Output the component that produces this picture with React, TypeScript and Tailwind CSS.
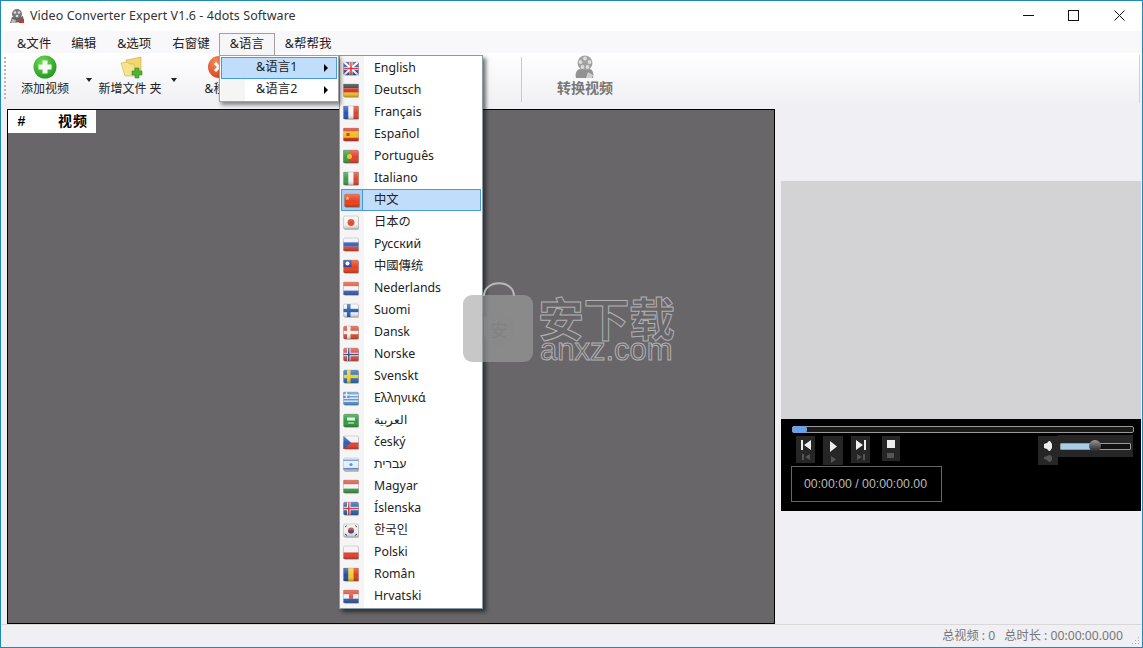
const UI = `"Noto Sans","Noto Sans CJK SC",sans-serif`;

function F({ children, bg = "#ddd" }: { children?: React.ReactNode; bg?: string }) {
  return (
    <svg width="16" height="15" viewBox="0 0 16 15" className="shrink-0">
      <defs>
        <linearGradient id="sh" x1="0" y1="0" x2="0" y2="1">
          <stop offset="0" stopColor="#fff" stopOpacity=".3" />
          <stop offset=".55" stopColor="#fff" stopOpacity="0" />
          <stop offset="1" stopColor="#000" stopOpacity=".25" />
        </linearGradient>
      </defs>
      <rect x="1.5" y="2" width="14.500" height="13" rx="1" fill="#000" fillOpacity=".18" />
      <g>
        <rect x="0.5" y="1" width="15" height="13" rx="1.500" fill={bg} />
        {children}
        <rect x="0.5" y="1" width="15" height="13" rx="1.500" fill="url(#sh)" stroke="#7778" strokeWidth=".5" />
      </g>
    </svg>
  );
}
const H = (c: string[]) => (
  <F>
    {c.map((x, i) => (
      <rect key={i} x=".5" y={1 + (13 / c.length) * i} width="15" height={13 / c.length} fill={x} />
    ))}
  </F>
);
const V = (c: string[]) => (
  <F>
    {c.map((x, i) => (
      <rect key={i} x={0.5 + (15 / c.length) * i} y="1" width={15 / c.length} height="13" fill={x} />
    ))}
  </F>
);
const N = (bg: string, c: string, c2?: string) => (
  <F bg={bg}>
    <rect x="4" y="1" width="3.500" height="13" fill={c} />
    <rect x=".5" y="5.800" width="15" height="3.400" fill={c} />
    {c2 && <rect x="5" y="1" width="1.500" height="13" fill={c2} />}
    {c2 && <rect x=".5" y="6.800" width="15" height="1.400" fill={c2} />}
  </F>
);

const langs: [string, React.ReactNode][] = [
  ["English", <F bg="#3a4f9a"><path d="M1 1l14 13M15 1L1 14" stroke="#fff" strokeWidth="2" /><rect x="6.500" y="1" width="3" height="13" fill="#fff" /><rect x=".5" y="6" width="15" height="3" fill="#fff" /><rect x="7.200" y="1" width="1.600" height="13" fill="#d33" /><rect x=".5" y="6.700" width="15" height="1.600" fill="#d33" /></F>],
  ["Deutsch", H(["#333", "#d8341e", "#f5c623"])],
  ["Français", V(["#2456b8", "#f4f4f8", "#e2402c"])],
  ["Español", <F bg="#f2bd1c"><rect x=".5" y="1" width="15" height="3.200" fill="#d6321c" /><rect x=".5" y="10.800" width="15" height="3.200" fill="#d6321c" /><rect x="3.500" y="6" width="3" height="3" fill="#b5451c" /></F>],
  ["Português", <F bg="#e0402a"><rect x=".5" y="1" width="6" height="13" fill="#3d9a3d" /><circle cx="6.500" cy="7.500" r="2.500" fill="#eac02e" /></F>],
  ["Italiano", V(["#3a9a48", "#f4f4f4", "#e2402c"])],
  ["中文", <F bg="#e8401c"><path d="M3.500 3l.6 1.500 1.500.1-1.200 1 .4 1.500-1.300-.8-1.300.8.4-1.500-1.200-1 1.500-.1z" fill="#f8d030" /></F>],
  ["日本の", <F bg="#f2f2f2"><circle cx="8" cy="7.500" r="3.400" fill="#e4482c" /></F>],
  ["Русский", H(["#f2f2f6", "#3a62b8", "#e2402c"])],
  ["中國傳统", <F bg="#e8401c"><rect x=".5" y="1" width="8" height="7" fill="#2a3f9c" /><circle cx="4.500" cy="4.500" r="2" fill="#fff" /></F>],
  ["Nederlands", H(["#e2502c", "#f4f4f8", "#3a62b8"])],
  ["Suomi", N("#f2f4f8", "#2a62b0")],
  ["Dansk", N("#dc4a34", "#f6f2f0")],
  ["Norske", N("#d84a38", "#f0f0f0", "#2a4f9c")],
  ["Svenskt", N("#2a6ab8", "#f2cf2a")],
  ["Ελληνικά", <F bg="#5c9ad8"><rect x=".5" y="3.500" width="15" height="1.400" fill="#eef" /><rect x=".5" y="6.500" width="15" height="1.400" fill="#eef" /><rect x=".5" y="9.500" width="15" height="1.400" fill="#eef" /><rect x=".5" y="1" width="6" height="6" fill="#4a88cc" /><rect x="2.800" y="1" width="1.400" height="6" fill="#eef" /><rect x=".5" y="3.300" width="6" height="1.400" fill="#eef" /></F>],
  ["العربية", <F bg="#2f9a3a"><rect x="4" y="4.500" width="8" height="3" fill="#dfe" /><rect x="5" y="9.500" width="6" height="1" fill="#dfe" /></F>],
  ["český", <F bg="#f2f2f2"><rect x=".5" y="7.500" width="15" height="6.500" fill="#e2402c" /><path d="M.5 1L8 7.500 .5 14z" fill="#2a5cb0" /></F>],
  ["עברית", <F bg="#e8eef8"><rect x=".5" y="2.500" width="15" height="1.500" fill="#5c8fd8" /><rect x=".5" y="11" width="15" height="1.500" fill="#5c8fd8" /><circle cx="8" cy="7.500" r="1.600" fill="#5c8fd8" /></F>],
  ["Magyar", H(["#dc4a30", "#f4f4f4", "#3f9a48"])],
  ["Íslenska", <F bg="#2a62b0"><rect x="4" y="1" width="3.500" height="13" fill="#eee" /><rect x=".5" y="5.800" width="15" height="3.400" fill="#eee" /><rect x="5" y="1" width="1.500" height="13" fill="#d33" /><rect x=".5" y="6.800" width="15" height="1.400" fill="#d33" /></F>],
  ["한국인", <F bg="#eeeeee"><circle cx="8" cy="7.500" r="3" fill="#d8402c" /><path d="M5 7.500a3 3 0 0 0 6 0z" fill="#2a4fa0" /><path d="M2 4l2-1.500M12 2.500l2 1.500M2 11l2 1.500M12 12.500l2-1.500" stroke="#333" strokeWidth="1" /></F>],
  ["Polski", H(["#f2f2f2", "#e2402c"])],
  ["Român", V(["#24499c", "#f6cc1e", "#dc3a22"])],
  ["Hrvatski", <F><rect x=".5" y="1" width="15" height="4.300" fill="#e2402c" /><rect x=".5" y="5.300" width="15" height="4.400" fill="#f2f2f2" /><rect x=".5" y="9.700" width="15" height="4.300" fill="#2a5cb0" /><rect x="6" y="4" width="4" height="6" fill="#d85a4c" /></F>],
];

function Film() {
  return (
    <svg width="24" height="24" viewBox="0 0 24 24">
      <circle cx="12" cy="8" r="7.500" fill="#a2a2a2" />
      {[[12, 3.500], [7.500, 7], [16.500, 7], [9.500, 12], [14.500, 12]].map(([x, y], i) => (
        <circle key={i} cx={x} cy={y} r="1.900" fill="#dcdcdc" />
      ))}
      <path d="M3 23c-1-4 0-8 4-9l5 1 5-1c3 1 4 5 3 9z" fill="#929292" />
      <path d="M13 23l2-6 5 3-1 3z" fill="#cfcfcf" />
    </svg>
  );
}

function Caret() {
  return <span className="w-0 h-0 border-x-[3px] border-x-transparent border-t-[4px] border-t-[#222]" />;
}

function PlayerBtn({ children, h = "h-[27px]", w = "w-[19px]" }: { children: React.ReactNode; h?: string; w?: string }) {
  return <div className={`${h} ${w} bg-[#262626] flex flex-col items-center pt-[4px]`}>{children}</div>;
}

function TB({ icon, label, w, extra = "" }: { icon: React.ReactNode; label: string; w: string; extra?: string }) {
  return (
    <div className={`${w} flex flex-col items-center shrink-0 ${extra}`}>
      <div className="h-[25px] flex items-end justify-center">{icon}</div>
      <div className="text-[12px] leading-[18px] mt-[1px] whitespace-nowrap">{label}</div>
    </div>
  );
}

export default function App() {
  return (
    <div
      className="relative w-[1143px] h-[648px] overflow-hidden bg-[#f0eff3] border border-[#1f8ab5] flex flex-col text-[#222]"
      style={{ fontFamily: UI }}
    >
      {/* title bar */}
      <div className="h-[30px] shrink-0 bg-white flex items-center pl-[8px]">
        <svg width="16" height="16" viewBox="0 0 16 16">
          <circle cx="8" cy="6" r="5" fill="#777" />
          <circle cx="6" cy="4.500" r="1.300" fill="#ddd" />
          <circle cx="10" cy="4.500" r="1.300" fill="#ddd" />
          <circle cx="8" cy="8" r="1.300" fill="#ddd" />
          <path d="M1 15l2-6 6 1 5-2 1 6z" fill="#666" />
          <rect x="10" y="11" width="5" height="4" fill="#c9392b" />
          <path d="M3 11l4 1-1 3H2z" fill="#bbb" />
        </svg>
        <span className="ml-[5px] text-[12.500px] text-[#333] leading-none tracking-[0.060px]">Video Converter Expert V1.6 - 4dots Software</span>
        <div className="ml-auto flex items-center pr-[17px] mt-[-1px]">
          <svg width="11" height="11" viewBox="0 0 11 11" className="mr-[34px]"><path d="M0 5.500h11" stroke="#111" /></svg>
          <svg width="11" height="11" viewBox="0 0 11 11" className="mr-[35px]"><rect x=".5" y=".5" width="10" height="10" fill="none" stroke="#111" /></svg>
          <svg width="11" height="11" viewBox="0 0 11 11"><path d="M.5 .5l10 10M10.500 .5l-10 10" stroke="#111" /></svg>
        </div>
      </div>

      {/* menu bar */}
      <div className="h-[22px] shrink-0 bg-[#f8f7fa] flex items-center pt-[4px] text-[12.500px] leading-none">
        <span className="ml-[16px]">&文件</span>
        <span className="ml-[20px]">编辑</span>
        <span className="ml-[21px]">&选项</span>
        <span className="ml-[21px]">右窗键</span>
        <span className="ml-[9px] relative z-30 self-start mt-[-2px] w-[56px] h-[22px] border border-b-0 border-[#a0a0a0] bg-[#f6f6f8] flex items-center justify-center">&语言</span>
        <span className="ml-[10px]">&帮帮我</span>
      </div>

      {/* toolbar */}
      <div className="h-[53px] shrink-0 bg-gradient-to-b from-[#ffffff] to-[#f0eff3] flex items-start pl-[3px] pt-[1px] relative">
        <div className="h-[42px] w-0 border-l-2 border-dotted border-[#b8b8b8] mt-[3px]" />
        <TB
          w="w-[74px]"
          extra="ml-[2px]"
          label="添加视频"
          icon={
            <svg width="24" height="24" viewBox="0 0 24 24">
              <defs>
                <radialGradient id="g" cx=".4" cy=".3" r=".8">
                  <stop offset="0" stopColor="#6fdc50" />
                  <stop offset="1" stopColor="#1c8f1c" />
                </radialGradient>
              </defs>
              <circle cx="12" cy="12" r="11.500" fill="url(#g)" />
              <path d="M9.500 5.500h5v4h4v5h-4v4h-5v-4h-4v-5h4z" fill="#f4fbf2" />
            </svg>
          }
        />
        <div className="w-[8px] ml-[3px] mt-[24px] flex justify-center shrink-0"><Caret /></div>
        <TB
          w="w-[74px]"
          label="新增文件 夹"
          icon={
            <svg width="24" height="24" viewBox="0 0 24 24" className="ml-[3px]">
              <path d="M6 5l6-1 9-2v14L8 20z" fill="#f3d66e" stroke="#c9a640" strokeWidth=".6" />
              <path d="M1 8l6-1 3 2h4l1 12H5z" fill="#f7e38c" stroke="#cfae48" strokeWidth=".6" />
              <path d="M15 13h4v3h3v4h-3v3h-4v-3h-3v-4h3z" fill="#4fb33a" stroke="#2f8a2a" strokeWidth=".6" />
            </svg>
          }
        />
        <div className="w-[8px] ml-[3px] mt-[24px] flex justify-center shrink-0"><Caret /></div>
        <TB
          w="w-[60px]"
          extra="ml-[13px]"
          label="&移除"
          icon={
            <svg width="24" height="24" viewBox="0 0 24 24" className="mr-[4px]">
              <defs>
                <radialGradient id="r" cx=".4" cy=".3" r=".8">
                  <stop offset="0" stopColor="#f59060" />
                  <stop offset="1" stopColor="#d23a14" />
                </radialGradient>
              </defs>
              <circle cx="12" cy="12" r="11" fill="url(#r)" />
              <path d="M8 8l8 8M16 8l-8 8" stroke="#fff" strokeWidth="3" />
            </svg>
          }
        />
        <div className="ml-[270px] h-[45px] w-px bg-[#c8c8c8] mt-[3px]" />
        <div className="w-[126px] flex flex-col items-center shrink-0 text-[#777] font-bold">
          <div className="h-[25px] flex items-end"><Film /></div>
          <div className="text-[14px] leading-[18px] whitespace-nowrap">转换视频</div>
        </div>
        <div className="ml-auto mr-[2px] mt-[1px] h-[48px] w-px bg-[#d0d0d0]" />
      </div>

      {/* body */}
      <div className="flex-1 min-h-0 flex pl-[6px] pt-[3px]">
        <div className="w-[768px] h-[515px] border border-black bg-[#686669] shrink-0">
          <div className="w-[88px] h-[23px] pb-[2px] bg-white flex items-center text-[14px] font-bold text-black leading-none">
            <span className="w-[27px] text-center" style={{ fontFamily: `"Liberation Sans",sans-serif` }}>#</span>
            <span className="w-[61px] pl-[23px] tracking-[1px]">视频</span>
          </div>
        </div>
        <div className="ml-[6px] w-[360px] shrink-0 flex flex-col">
          <div className="h-[72px]" />
          <div className="h-[238px] bg-[#d3d2d5]" />
          <div className="h-[92px] bg-black px-[10px] pt-[7px]">
            <div className="relative h-[7px] rounded-[2px] border border-[#999] bg-[#1a1a1a] mr-[-3px] ml-[1px]">
              <div className="absolute left-[-1px] top-[-1px] w-[15px] h-[7px] rounded-[3px] bg-[#6aa0e8]" />
            </div>
            <div className="flex items-start mt-[3px] pl-[5px] mr-[-2px]">
              <PlayerBtn>
                <svg width="12" height="22" viewBox="0 0 12 22"><path d="M1 0h2v10H1zM11 0v10L4 5z" fill="#eee" /><path d="M2 14h2v6H2zM10 14v6l-5-3z" fill="#555" /></svg>
              </PlayerBtn>
              <div className="ml-[8px]">
                <PlayerBtn h="h-[29px]" w="w-[20px]">
                  <svg width="12" height="24" viewBox="0 0 12 24"><path d="M3 1l7 5.500-7 5.500z" fill="#eee" /><path d="M4 16l5 3.500-5 3.500z" fill="#555" /></svg>
                </PlayerBtn>
              </div>
              <div className="ml-[8px]">
                <PlayerBtn>
                  <svg width="12" height="22" viewBox="0 0 12 22"><path d="M1 0v10l7-5zM9 0h2v10H9z" fill="#eee" /><path d="M2 14v6l5-3zM8 14h2v6H8z" fill="#555" /></svg>
                </PlayerBtn>
              </div>
              <div className="ml-[12px]">
                <PlayerBtn h="h-[25px]" w="w-[18px]">
                  <svg width="10" height="20" viewBox="0 0 10 20"><rect x="1" y="0" width="8" height="8" fill="#eee" /><rect x="1" y="13" width="7" height="5" fill="#555" /></svg>
                </PlayerBtn>
              </div>
              <div className="ml-auto flex items-start">
                <PlayerBtn h="h-[29px]" w="w-[20px]">
                  <svg width="10" height="24" viewBox="0 0 10 24"><path d="M1 4l3-1 2-2h1l2 3v4l-2 3H6L4 9 1 8z" fill="#eee" /><path d="M1 17l3-1 2-1h1l2 2v3l-2 2H6l-2-2-3-1z" fill="#555" /></svg>
                </PlayerBtn>
                <div className="w-[75px] h-[22px] bg-[#262626] mt-[-1px] relative flex items-center px-[2px]">
                  <div className="w-full h-[7px] border border-[#999] bg-[#111] rounded-[1px]">
                    <div className="w-[32px] h-full bg-[#a8cde8]" />
                  </div>
                  <div className="absolute left-[31px] top-[5px] w-[12px] h-[12px] rounded-full bg-gradient-to-b from-[#999] to-[#222]" />
                </div>
              </div>
            </div>
            <div className="w-[151px] h-[36px] border border-[#666] mt-[1px] pr-[2px] flex items-center justify-center text-[12.300px] text-[#bbb]" style={{ fontFamily: `"Liberation Sans",sans-serif` }}>
              00:00:00 / 00:00:00.00
            </div>
          </div>
        </div>
      </div>

      {/* status bar */}
      <div className="h-[23px] shrink-0 border-t border-[#d8d8d8] bg-[#f0eff3] flex items-center justify-end pr-[19px] text-[12.200px] text-[#777] leading-none relative">
        <span>总视频 : 0</span>
        <span className="ml-[9px]">总时长 : 00:00:00.000</span>
        <svg width="10" height="10" viewBox="0 0 10 10" className="absolute right-[2px] bottom-[1px]">
          <path d="M8 1h1v1H8zM8 4h1v1H8zM8 7h1v1H8zM5 4h1v1H5zM5 7h1v1H5zM2 7h1v1H2z" fill="#aaa" />
        </svg>
      </div>

      {/* active first drop-down */}
      <div className="absolute left-[218px] top-[54px] w-[120px] h-[47px] border border-[#a0a0a0] bg-white shadow-[2px_3px_4px_rgba(0,0,0,.45)] z-20 p-[1px] text-[12.500px] leading-none">
        <div className="h-[22px] pb-[2px] bg-[#c0ddfb] border border-[#4a9ad8] flex items-center relative">
          <span className="ml-[34px]">&语言1</span>
          <span className="absolute right-[8px] top-[6px] w-0 h-0 border-y-[4px] border-y-transparent border-l-[4px] border-l-black" />
        </div>
        <div className="h-[22px] pb-[2px] flex items-center relative">
          <div className="absolute left-0 top-0 w-[24px] h-full bg-[#f5f5f5]" />
          <span className="ml-[35px] relative">&语言2</span>
          <span className="absolute right-[9px] top-[7px] w-0 h-0 border-y-[4px] border-y-transparent border-l-[4px] border-l-black" />
        </div>
      </div>

      {/* language drop-down */}
      <div className="absolute left-[338px] top-[54px] w-[144px] border border-[#8c9aa8] bg-white shadow-[3px_3px_4px_rgba(0,0,0,.55)] z-10 py-[1px] text-[12.300px] leading-none">
        <div className="absolute left-0 top-0 bottom-0 w-[24px] bg-[#f5f5f6]" />
        {langs.map(([name, flag]) =>
          name === "中文" ? (
            <div key={name} className="relative h-[22px] flex items-center mx-[1px] bg-[#c0ddfb] border border-[#4a9ad8]">
              <div className="h-full w-[21px] border-r border-[#4a9ad8] bg-[#a8cdf2] flex items-center justify-center"><span className="flex">{flag}</span></div>
              <span className="ml-[11px]">{name}</span>
            </div>
          ) : (
            <div key={name} className="relative h-[22px] flex items-center">
              <div className="ml-[3px] flex">{flag}</div>
              <span className="ml-[15px] whitespace-nowrap">{name}</span>
            </div>
          )
        )}
      </div>

      {/* watermark */}
      <div className="absolute left-[462px] top-[281px] flex pointer-events-none z-40" aria-hidden>
        <svg width="70" height="81" viewBox="0 0 70 81">
          <path d="M21 14C21-3 51-3 51 14" fill="none" stroke="#b8b8ba" strokeWidth="2" />
          <rect x="0" y="13" width="70" height="67" rx="9" fill="#a2a2a2" fillOpacity=".6" />
          <path d="M21 35l15-4 15 4v16c0 8-8 11-15 15-7-4-15-7-15-15z" fill="#8a898b" fillOpacity=".55" />
          <text x="36" y="55" textAnchor="middle" fontSize="18" fill="#7d7c7e" fillOpacity=".6">安</text>
        </svg>
        <div className="ml-[5px] mt-[11px] flex flex-col items-start text-transparent" style={{ WebkitTextStroke: "1px #b0afb1", fontFamily: `"Noto Sans CJK SC",sans-serif` }}>
          <span className="text-[46px] font-bold leading-[46px] h-[46px] tracking-[-0.500px]">安下载</span>
          <span className="text-[31px] leading-[22px] h-[22px] ml-[2px]" style={{ fontFamily: `"Liberation Sans",sans-serif` }}>anxz.com</span>
        </div>
      </div>
    </div>
  );
}
